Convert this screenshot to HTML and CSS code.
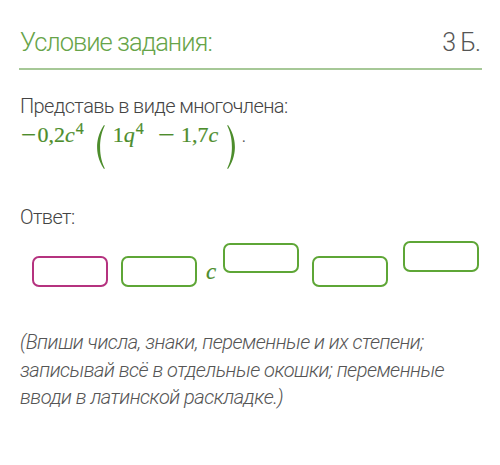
FILE: index.html
```html
<!DOCTYPE html>
<html lang="ru">
<head>
<meta charset="utf-8">
<link rel="stylesheet" href="styles.css">
</head>
<body>
<div class="page">
  <div class="head">
    <span class="title">Условие задания:</span>
    <span class="points">3 Б.</span>
  </div>
  <p class="task">Представь в виде многочлена:</p>
  <div class="math"><span class="minus m1">−</span><span class="n">0,2</span><span class="v">c</span><span class="sup">4</span><svg class="paren lp" width="9" height="46" viewBox="0 0 9 46"><path d="M8 1 C2 10 1.1 18 1.1 23 C1.1 28 2 36 8 45 L8.8 44.4 C4.6 36 4.1 28 4.1 23 C4.1 18 4.6 10 8.8 1.6 Z" fill="#4d8d2c"/></svg><span class="n one">1</span><span class="v">q</span><span class="sup">4</span><span class="minus m2">−</span><span class="n">1,7</span><span class="v">c</span><svg class="paren rp" width="9" height="46" viewBox="0 0 9 46"><path d="M1 1 C7 10 7.9 18 7.9 23 C7.9 28 7 36 1 45 L0.2 44.4 C4.4 36 4.9 28 4.9 23 C4.9 18 4.4 10 0.2 1.6 Z" fill="#4d8d2c"/></svg><span class="dot">.</span></div>
  <p class="answer">Ответ:</p>
  <div class="boxes">
    <div class="box pink low"></div>
    <div class="box low b2"></div>
    <span class="var">c</span>
    <div class="box high3"></div>
    <div class="box low b4"></div>
    <div class="box high5"></div>
  </div>
  <p class="hint">(Впиши числа, знаки, переменные и их степени; записывай всё в отдельные окошки; переменные вводи в латинской раскладке.)</p>
</div>
</body>
</html>
```
FILE: styles.css
```css
html, body {
  margin: 0;
  padding: 0;
  background: #ffffff;
}
.page {
  padding: 0 18px 0 20px;
  font-family: Roboto, "Noto Sans", sans-serif;
  font-weight: 300;
}
.head {
  display: flex;
  justify-content: space-between;
  align-items: baseline;
  padding-top: 27px;
  padding-bottom: 10px;
  border-bottom: 2px solid #a6c897;
  margin-left: -1px;
}
.title {
  font-size: 25.5px;
  letter-spacing: -1px;
  color: #67a449;
  line-height: 30px;
  margin-left: 1px;
}
.points {
  font-size: 25px;
  letter-spacing: -1px;
  color: #555555;
  line-height: 30px;
  margin-right: 2px;
}
.task {
  margin: 24px 0 0 0;
  font-size: 20px;
  letter-spacing: -0.6px;
  line-height: 24px;
  color: #444444;
}
.math {
  margin-top: 5px;
  font-family: "Liberation Serif", serif;
  font-size: 22px;
  line-height: 24px;
  color: #4d8d2c;
  -webkit-text-stroke: 0.2px #4d8d2c;
  white-space: nowrap;
}
.math span { display: inline-block; }
.minus { transform: scaleX(1.22); transform-origin: left center; }
.m1 { margin-left: 1px; margin-right: 4px; }
.m2 { margin-left: 14px; margin-right: 11px; transform: scaleX(1.35); }
.v { font-style: italic; }
.sup {
  font-size: 16px;
  line-height: 0;
  vertical-align: 8px;
  margin-left: 1px;
}
.paren { vertical-align: -28px; }
.lp { margin-left: 12px; }
.one { margin-left: 8px; }
.rp { margin-left: 9px; }
.math .dot {
  color: #555;
  margin-left: 5px;
  font-family: Roboto, sans-serif;
  font-size: 20px;
  -webkit-text-stroke: 0;
}
.answer {
  margin: 35px 0 0 0;
  font-size: 20px;
  letter-spacing: -0.6px;
  line-height: 24px;
  color: #444444;
}
.boxes {
  display: flex;
  align-items: flex-start;
  margin-top: 12px;
  margin-left: 12px;
  height: 46px;
}
.box {
  width: 76px;
  height: 31px;
  box-sizing: border-box;
  border: 2.5px solid #5ea636;
  border-radius: 7px;
  flex: none;
}
.box.pink { border-color: #b5327f; }
.low { margin-top: 15px; }
.b2 { margin-left: 13px; }
.var {
  font-family: "Liberation Serif", serif;
  font-style: italic;
  font-size: 23px;
  color: #4d8d2c;
  -webkit-text-stroke: 0.2px #4d8d2c;
  margin: 19px 7px 0 9px;
  line-height: 24px;
}
.high3 { margin-top: 2px; height: 30px; }
.b4 { margin-left: 13px; }
.high5 { margin-left: 15px; margin-top: 0; }
.hint {
  margin: 42px 0 0 0;
  font-size: 20px;
  letter-spacing: -0.5px;
  line-height: 27.5px;
  font-style: italic;
  color: #555555;
  max-width: 450px;
}
```
